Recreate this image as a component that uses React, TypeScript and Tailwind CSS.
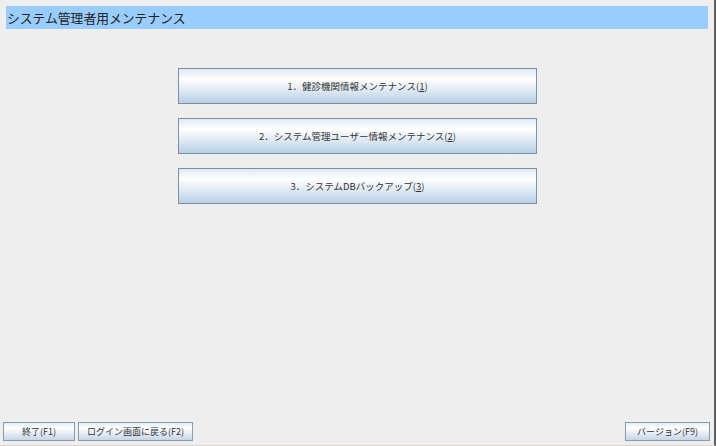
const font = { fontFamily: '"Noto Sans CJK JP", "Noto Sans", sans-serif' };

function MenuButton({ label, mnemonic }: { label: string; mnemonic: string }) {
  return (
    <button
      type="button"
      className="flex h-[36px] w-[359px] items-center justify-center border border-[#7d8ea0] bg-gradient-to-b from-[#dfe9f4] via-white via-30% to-[#b9d0e6] text-[9.5px] text-[#333333]"
    >
      {label}(<span className="underline">{mnemonic}</span>)
    </button>
  );
}

function FooterButton({ label, width }: { label: string; width: string }) {
  return (
    <button
      type="button"
      className={`flex h-[19px] ${width} items-center justify-center border border-[#8a9bac] bg-gradient-to-b from-[#e6eef7] via-white via-30% to-[#c4d6e8] text-[9px] text-[#333333]`}
    >
      {label}
    </button>
  );
}

export default function App() {
  return (
    <div style={font} className="flex h-[446px] w-[716px] flex-col overflow-hidden bg-[#eeeeee]">
      <div className="flex flex-1 flex-col border-r-2 border-b border-r-[#5f5f5f] border-b-[#ddd3c8] pr-[1px]">
        <div className="pl-[6px] pr-[5px] pt-[6px]">
          <div className="flex h-[23px] items-center bg-[#99ccff] pl-[1px] text-[12.8px] text-[#222222]">
            システム管理者用メンテナンス
          </div>
        </div>

        <div className="mt-[39px] flex flex-col items-center gap-[14px] pl-[2px]">
          <MenuButton label="1．健診機関情報メンテナンス" mnemonic="1" />
          <MenuButton label="2．システム管理ユーザー情報メンテナンス" mnemonic="2" />
          <MenuButton label="3．システムDBバックアップ" mnemonic="3" />
        </div>

        <div className="mt-auto mb-[4px] flex items-center px-[3px]">
          <div className="flex gap-[3px]">
            <FooterButton label="終了(F1)" width="w-[72px]" />
            <FooterButton label="ログイン画面に戻る(F2)" width="w-[115px]" />
          </div>
          <div className="ml-auto">
            <FooterButton label="バージョン(F9)" width="w-[85px]" />
          </div>
        </div>
      </div>
    </div>
  );
}
